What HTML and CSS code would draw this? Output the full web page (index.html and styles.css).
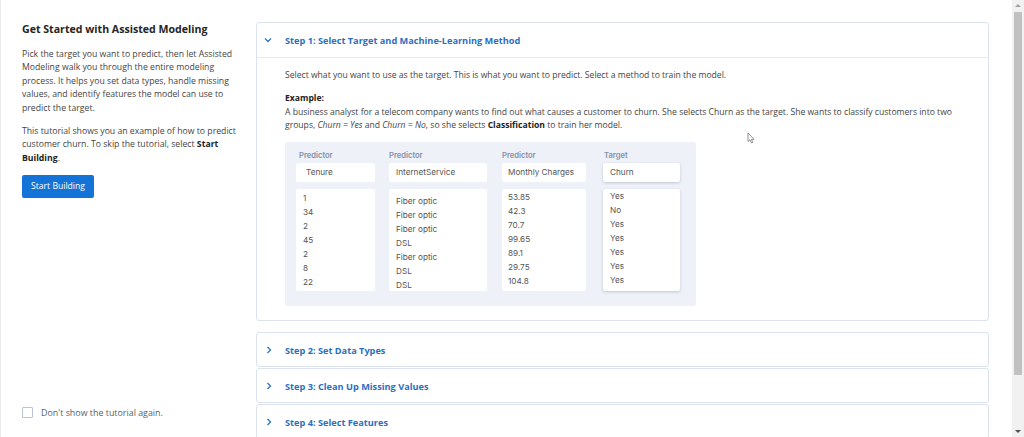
FILE: index.html
```html
<!DOCTYPE html>
<html>
<head>
<meta charset="utf-8">
<link rel="stylesheet" href="styles.css">
</head>
<body>
<div class="page">
  <aside class="sidebar">
    <div class="intro">
      <h1 class="side-title">Get Started with Assisted Modeling</h1>
      <p class="side-text">Pick the target you want to predict, then let Assisted Modeling walk you through the entire modeling process. It helps you set data types, handle missing values, and identify features the model can use to predict the target.</p>
      <p class="side-text last">This tutorial shows you an example of how to predict customer churn. To skip the tutorial, select <b>Start Building</b>.</p>
      <button class="btn-primary">Start Building</button>
    </div>
    <label class="check-row"><span class="checkbox"></span><span class="check-label">Don't show the tutorial again.</span></label>
  </aside>
  <main class="main">
    <section class="card open">
      <div class="card-head">
        <svg class="chev" width="8" height="6" viewBox="0 0 8 6"><path d="M1 1.5 L4 4.5 L7 1.5" fill="none" stroke="#2f73c8" stroke-width="1.3"/></svg>
        <span class="card-title">Step 1: Select Target and Machine-Learning Method</span>
      </div>
      <div class="card-body">
        <p class="body-text">Select what you want to use as the target. This is what you want to predict. Select a method to train the model.</p>
        <p class="body-text example"><b>Example:</b><br>A business analyst for a telecom company wants to find out what causes a customer to churn. She selects Churn as the target. She wants to classify customers into two groups, <i>Churn = Yes</i> and <i>Churn = No</i>, so she selects <b>Classification</b> to train her model.</p>
        <div class="demo">
          <div class="col c1">
            <div class="col-label">Predictor</div>
            <div class="head-box">Tenure</div>
            <div class="data-box">1<br>34<br>2<br>45<br>2<br>8<br>22</div>
          </div>
          <div class="col c2">
            <div class="col-label">Predictor</div>
            <div class="head-box">InternetService</div>
            <div class="data-box">Fiber optic<br>Fiber optic<br>Fiber optic<br>DSL<br>Fiber optic<br>DSL<br>DSL</div>
          </div>
          <div class="col c3">
            <div class="col-label">Predictor</div>
            <div class="head-box">Monthly Charges</div>
            <div class="data-box">53.85<br>42.3<br>70.7<br>99.65<br>89.1<br>29.75<br>104.8</div>
          </div>
          <div class="col c4">
            <div class="col-label">Target</div>
            <div class="head-box">Churn</div>
            <div class="data-box">Yes<br>No<br>Yes<br>Yes<br>Yes<br>Yes<br>Yes</div>
          </div>
        </div>
      </div>
    </section>
    <section class="card closed first-closed">
      <div class="card-head">
        <svg class="chev-r" width="6" height="8" viewBox="0 0 6 8"><path d="M1.5 1 L4.5 4 L1.5 7" fill="none" stroke="#2f73c8" stroke-width="1.3"/></svg>
        <span class="card-title">Step 2: Set Data Types</span>
      </div>
    </section>
    <section class="card closed">
      <div class="card-head">
        <svg class="chev-r" width="6" height="8" viewBox="0 0 6 8"><path d="M1.5 1 L4.5 4 L1.5 7" fill="none" stroke="#2f73c8" stroke-width="1.3"/></svg>
        <span class="card-title">Step 3: Clean Up Missing Values</span>
      </div>
    </section>
    <section class="card closed">
      <div class="card-head">
        <svg class="chev-r" width="6" height="8" viewBox="0 0 6 8"><path d="M1.5 1 L4.5 4 L1.5 7" fill="none" stroke="#2f73c8" stroke-width="1.3"/></svg>
        <span class="card-title">Step 4: Select Features</span>
      </div>
    </section>
  </main>
  <div class="scrollbar">
    <div class="arrow up"></div>
    <div class="track"><div class="thumb"></div></div>
    <div class="arrow down"></div>
  </div>
</div>
<svg class="cursor" width="9" height="12" viewBox="0 0 9 12"><path d="M1 1 L1 9.5 L3 7.8 L4.5 11 L5.8 10.4 L4.4 7.3 L7 7.3 Z" fill="#fff" stroke="#777" stroke-width="0.8"/></svg>
</body>
</html>
```

FILE: styles.css
```css
* { box-sizing: border-box; }
html, body { margin: 0; padding: 0; }
body {
  width: 1024px;
  height: 437px;
  overflow: hidden;
  background: #fff;
  font-family: "Open Sans", "Noto Sans", sans-serif;
  color: #3a3a3a;
  position: relative;
}
.page {
  display: flex;
  height: 437px;
}
.sidebar {
  width: 256px;
  flex: none;
  border-left: 1px solid #ececec;
  padding: 22px 12px 18px 21px;
  display: flex;
  flex-direction: column;
  justify-content: space-between;
}
.side-title {
  margin: 0 0 12px;
  font-size: 10.6px;
  font-weight: 700;
  color: #252525;
  line-height: 14px;
}
.side-text {
  margin: 0 0 10px;
  font-size: 8.7px;
  line-height: 13.4px;
  color: #444;
}
.side-text.last { margin-bottom: 7px; }
.side-text b { color: #222; }
.btn-primary {
  margin-top: 0;
  background: #1473d6;
  color: #fff;
  border: none;
  border-radius: 2px;
  font-family: inherit;
  font-size: 8.6px;
  height: 23px;
  width: 72px;
  padding: 0;
}
.check-row {
  display: flex;
  align-items: center;
  gap: 8px;
}
.checkbox {
  width: 11px;
  height: 11px;
  border: 1px solid #b9c3d6;
  border-radius: 1px;
  background: #fff;
}
.check-label {
  font-size: 8.9px;
  color: #5a5f6b;
}
.main {
  flex: 1;
  padding: 22px 23px 0 0;
  display: flex;
  flex-direction: column;
  min-width: 0;
}
.card {
  border: 1px solid #dce2ee;
  border-radius: 3px;
  background: #fff;
  flex: none;
}
.card.open { margin-bottom: 11px; }
.card.closed { margin-bottom: 1px; height: 35px; }
.card-head {
  height: 35px;
  display: flex;
  align-items: center;
  padding-left: 7px;
}
.card.open .card-head { border-bottom: 1px solid #e6eaf2; }
.chev { margin-right: 13px; margin-left: 0; }
.chev-r { margin-left: 2px; margin-right: 13px; }
.card-title {
  font-size: 9.2px;
  font-weight: 700;
  color: #2b6fc2;
}
.card-body {
  padding: 11px 20px 14px 28px;
}
.body-text {
  margin: 0 0 10px;
  font-size: 8.6px;
  line-height: 13.4px;
  color: #444;
}
.body-text b { color: #222; }
.example { margin-bottom: 9px; }
.demo {
  width: 411px;
  height: 164px;
  background: #eef1f8;
  border-radius: 2px;
  display: flex;
  padding: 8px 0 0 11px;
  font-family: "Inter", "Roboto", sans-serif;
}
.col { display: flex; flex-direction: column; }
.c1 { width: 79px; margin-right: 14px; }
.c2 { width: 98px; margin-right: 15px; }
.c3 { width: 84px; margin-right: 17px; }
.c4 { width: 77px; }
.col-label {
  font-size: 7.6px;
  font-weight: 600;
  color: #8590a8;
  height: 12px;
  line-height: 12px;
  margin-bottom: 1px;
}
.c1 .col-label { padding-left: 3px; }
.c4 .col-label { padding-left: 1px; }
.head-box {
  height: 19px;
  background: #fff;
  border-radius: 2px;
  font-size: 8.2px;
  color: #555;
  line-height: 19px;
  padding-left: 10px;
  margin-bottom: 7px;
}
.c2 .head-box { padding-left: 7px; }
.c3 .head-box { padding-left: 6px; }
.c4 .head-box { padding-left: 7px; box-shadow: 0 1px 3px rgba(60,70,100,0.25); }
.data-box {
  height: 102px;
  background: #fff;
  border-radius: 2px;
  font-size: 8.2px;
  color: #555;
  line-height: 14px;
  padding: 2px 0 0 7px;
}
.c2 .data-box { padding-top: 5px; padding-left: 7px; }
.c3 .data-box { padding-top: 1px; padding-left: 6px; }
.c4 .data-box { padding-top: 0; padding-left: 7px; box-shadow: 0 1px 3px rgba(60,70,100,0.25); }
.scrollbar {
  width: 12px;
  flex: none;
  background: #f1f1f1;
  display: flex;
  flex-direction: column;
  align-items: center;
}
.arrow {
  width: 0;
  height: 0;
  border-left: 3px solid transparent;
  border-right: 3px solid transparent;
  margin: 4px 0;
}
.arrow.up { border-bottom: 3px solid #a3a3a3; margin-top: 4px; }
.arrow.down { border-top: 3px solid #505050; margin-bottom: 4px; }
.track { flex: 1; width: 100%; display: flex; justify-content: center; }
.thumb {
  width: 8px;
  height: 363px;
  background: #c1c1c1;
  margin-top: 1px;
}
.cursor {
  position: absolute;
  left: 747px;
  top: 132px;
}
```
